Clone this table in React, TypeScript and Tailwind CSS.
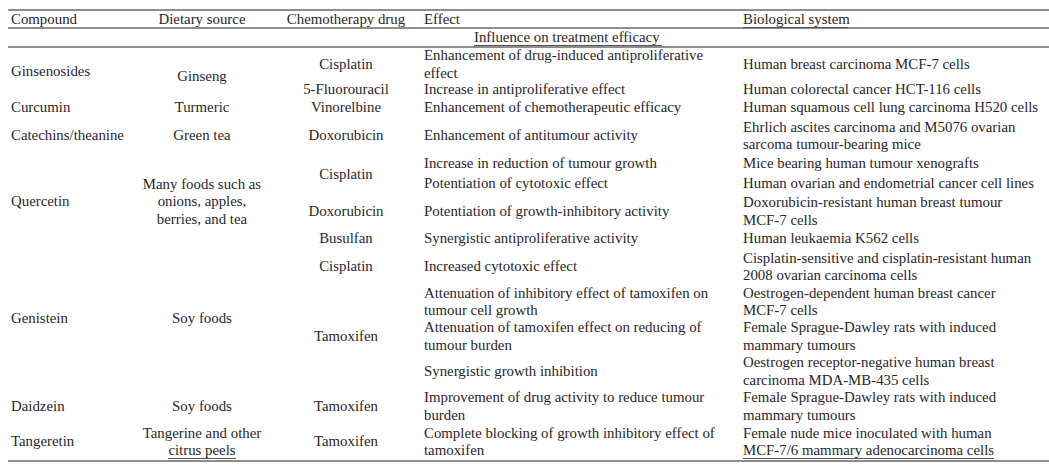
import React from "react";

const rule = "h-[2px] bg-[#8e8e8e]";

function Cell({
  className = "",
  children,
}: {
  className?: string;
  children: React.ReactNode;
}) {
  return <div className={`flex items-center whitespace-nowrap ${className}`}>{children}</div>;
}

export default function App() {
  return (
    <div className="w-[1049px] h-[464px] overflow-hidden bg-white pl-[8px] pt-[9px] font-['Liberation_Serif',serif] text-[14.85px] leading-[17.5px] text-[#2a2627]">
      <div className={rule} />

      {/* header */}
      <div className="grid grid-cols-[128px_132px_156px_319px_306px] h-[16px]">
        <Cell className="pl-[3px]">Compound</Cell>
        <Cell className="justify-center">Dietary source</Cell>
        <Cell className="justify-center">Chemotherapy drug</Cell>
        <Cell>Effect</Cell>
        <Cell>
          <span className="inline-block w-[105px] border-b border-[#555] leading-[15px]">Biological system</span>
        </Cell>
      </div>
      <div className={rule} />

      <div className="flex h-[17px] items-center pl-[466px]">
        <span className="leading-[15px] border-b border-[#555] pr-[2px]">Influence on treatment efficacy</span>
      </div>
      <div className={rule} />

      {/* body */}
      <div className="grid grid-cols-[128px_132px_156px_319px_306px] grid-rows-[33px_18px_18px_38px_18px_21px_35px_20px_36px_34px_35px_35px_35px_36px]">
        {/* Ginsenosides */}
        <Cell className="col-start-1 row-start-1 row-span-2 pl-[3px] pb-[4px]">Ginsenosides</Cell>
        <Cell className="col-start-2 row-start-1 row-span-2 justify-center pt-[6px]">Ginseng</Cell>
        <Cell className="col-start-3 row-start-1 justify-center">Cisplatin</Cell>
        <Cell className="col-start-4 row-start-1">
          <span>
            Enhancement of drug-induced antiproliferative
            <br />
            effect
          </span>
        </Cell>
        <Cell className="col-start-5 row-start-1">Human breast carcinoma MCF-7 cells</Cell>
        <Cell className="col-start-3 row-start-2 justify-center">5-Fluorouracil</Cell>
        <Cell className="col-start-4 row-start-2">Increase in antiproliferative effect</Cell>
        <Cell className="col-start-5 row-start-2">Human colorectal cancer HCT-116 cells</Cell>

        {/* Curcumin */}
        <Cell className="col-start-1 row-start-3 pl-[3px]">Curcumin</Cell>
        <Cell className="col-start-2 row-start-3 justify-center">Turmeric</Cell>
        <Cell className="col-start-3 row-start-3 justify-center">Vinorelbine</Cell>
        <Cell className="col-start-4 row-start-3">Enhancement of chemotherapeutic efficacy</Cell>
        <Cell className="col-start-5 row-start-3">Human squamous cell lung carcinoma H520 cells</Cell>

        {/* Catechins */}
        <Cell className="col-start-1 row-start-4 pl-[3px]">Catechins/theanine</Cell>
        <Cell className="col-start-2 row-start-4 justify-center">Green tea</Cell>
        <Cell className="col-start-3 row-start-4 justify-center">Doxorubicin</Cell>
        <Cell className="col-start-4 row-start-4">Enhancement of antitumour activity</Cell>
        <Cell className="col-start-5 row-start-4">
          <span>
            Ehrlich ascites carcinoma and M5076 ovarian
            <br />
            sarcoma tumour-bearing mice
          </span>
        </Cell>

        {/* Quercetin */}
        <Cell className="col-start-1 row-start-5 row-span-4 pl-[3px]">Quercetin</Cell>
        <Cell className="col-start-2 row-start-5 row-span-4 justify-center text-center">
          <span>
            Many foods such as
            <br />
            onions, apples,
            <br />
            berries, and tea
          </span>
        </Cell>
        <Cell className="col-start-3 row-start-5 row-span-2 justify-center">Cisplatin</Cell>
        <Cell className="col-start-4 row-start-5">Increase in reduction of tumour growth</Cell>
        <Cell className="col-start-5 row-start-5">Mice bearing human tumour xenografts</Cell>
        <Cell className="col-start-4 row-start-6">Potentiation of cytotoxic effect</Cell>
        <Cell className="col-start-5 row-start-6">Human ovarian and endometrial cancer cell lines</Cell>
        <Cell className="col-start-3 row-start-7 justify-center">Doxorubicin</Cell>
        <Cell className="col-start-4 row-start-7">Potentiation of growth-inhibitory activity</Cell>
        <Cell className="col-start-5 row-start-7">
          <span>
            Doxorubicin-resistant human breast tumour
            <br />
            MCF-7 cells
          </span>
        </Cell>
        <Cell className="col-start-3 row-start-8 justify-center">Busulfan</Cell>
        <Cell className="col-start-4 row-start-8">Synergistic antiproliferative activity</Cell>
        <Cell className="col-start-5 row-start-8">Human leukaemia K562 cells</Cell>

        {/* Genistein */}
        <Cell className="col-start-1 row-start-9 row-span-4 pl-[3px]">Genistein</Cell>
        <Cell className="col-start-2 row-start-9 row-span-4 justify-center">Soy foods</Cell>
        <Cell className="col-start-3 row-start-9 justify-center">Cisplatin</Cell>
        <Cell className="col-start-4 row-start-9">Increased cytotoxic effect</Cell>
        <Cell className="col-start-5 row-start-9">
          <span>
            Cisplatin-sensitive and cisplatin-resistant human
            <br />
            2008 ovarian carcinoma cells
          </span>
        </Cell>
        <Cell className="col-start-3 row-start-10 row-span-3 justify-center">Tamoxifen</Cell>
        <Cell className="col-start-4 row-start-10">
          <span>
            Attenuation of inhibitory effect of tamoxifen on
            <br />
            tumour cell growth
          </span>
        </Cell>
        <Cell className="col-start-5 row-start-10">
          <span>
            Oestrogen-dependent human breast cancer
            <br />
            MCF-7 cells
          </span>
        </Cell>
        <Cell className="col-start-4 row-start-11">
          <span>
            Attenuation of tamoxifen effect on reducing of
            <br />
            tumour burden
          </span>
        </Cell>
        <Cell className="col-start-5 row-start-11">
          <span>
            Female Sprague-Dawley rats with induced
            <br />
            mammary tumours
          </span>
        </Cell>
        <Cell className="col-start-4 row-start-12">Synergistic growth inhibition</Cell>
        <Cell className="col-start-5 row-start-12">
          <span>
            Oestrogen receptor-negative human breast
            <br />
            carcinoma MDA-MB-435 cells
          </span>
        </Cell>

        {/* Daidzein */}
        <Cell className="col-start-1 row-start-13 pl-[3px]">Daidzein</Cell>
        <Cell className="col-start-2 row-start-13 justify-center">Soy foods</Cell>
        <Cell className="col-start-3 row-start-13 justify-center">Tamoxifen</Cell>
        <Cell className="col-start-4 row-start-13">
          <span>
            Improvement of drug activity to reduce tumour
            <br />
            burden
          </span>
        </Cell>
        <Cell className="col-start-5 row-start-13">
          <span>
            Female Sprague-Dawley rats with induced
            <br />
            mammary tumours
          </span>
        </Cell>

        {/* Tangeretin */}
        <Cell className="col-start-1 row-start-14 pl-[3px]">Tangeretin</Cell>
        <Cell className="col-start-2 row-start-14 justify-center text-center">
          <span>
            Tangerine and other
            <br />
            <span className="border-b border-[#555]">citrus peels</span>
          </span>
        </Cell>
        <Cell className="col-start-3 row-start-14 justify-center">Tamoxifen</Cell>
        <Cell className="col-start-4 row-start-14">
          <span>
            Complete blocking of growth inhibitory effect of
            <br />
            tamoxifen
          </span>
        </Cell>
        <Cell className="col-start-5 row-start-14">
          <span>
            Female nude mice inoculated with human
            <br />
            <span className="border-b border-[#555]">MCF-7/6 mammary adenocarcinoma cells</span>
          </span>
        </Cell>
      </div>
      <div className={rule} />
    </div>
  );
}
